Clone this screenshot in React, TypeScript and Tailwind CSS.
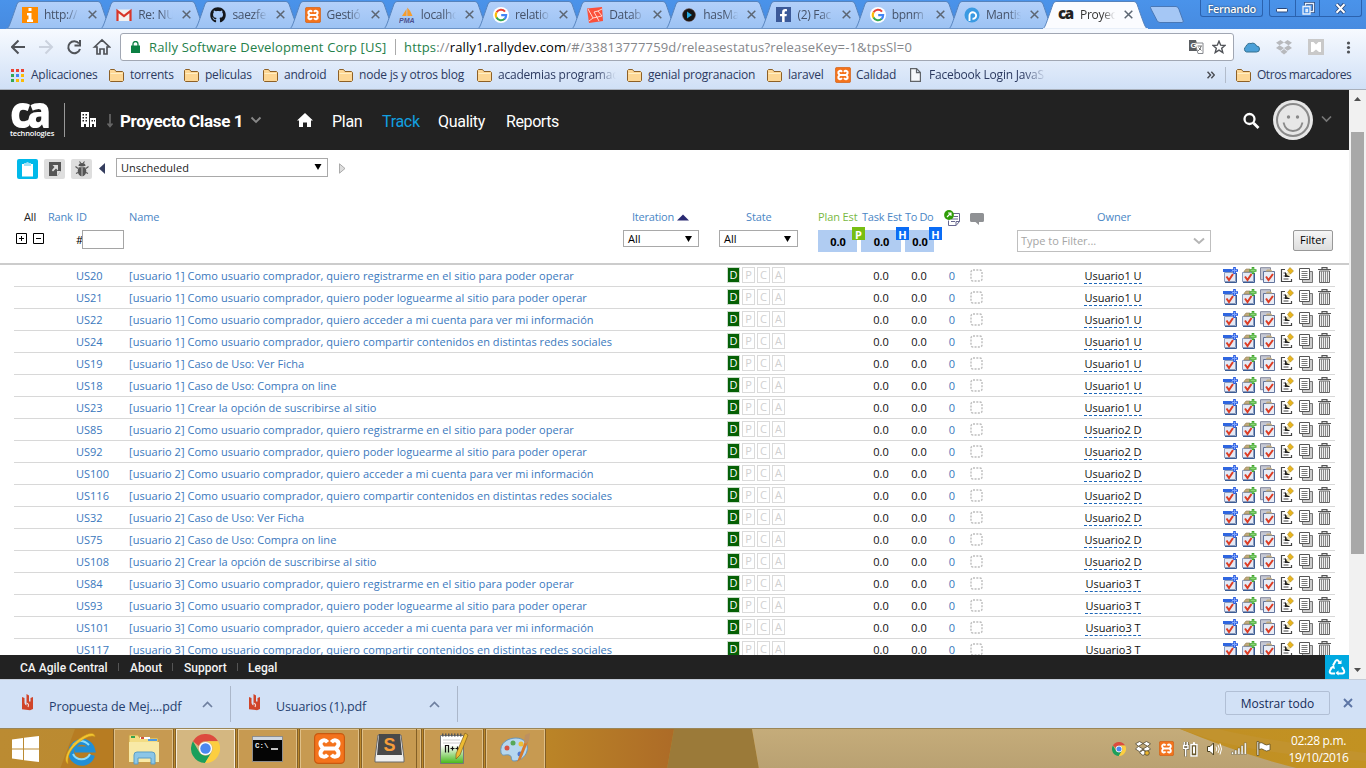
import React from "react";
import { FaGithub, FaFacebookF } from "react-icons/fa";

type Kind = "info" | "gmail" | "github" | "xampp" | "pma" | "google" | "laravel" | "play" | "facebook" | "mantis" | "ca";

function Xampp({ size }: { size: number }) {
  return (
    <svg width={size} height={size} viewBox="0 0 16 16" className="shrink-0">
      <rect x="0.3" y="0.3" width="15.4" height="15.4" rx="2" fill="#f4731c" stroke="#c85a10" strokeWidth="0.6" />
      <path d="M7 4.800C5.500 2.900 3 3.900 3.400 6C3.600 7 4.500 7.300 4.500 8S3.600 9 3.400 10C3 12.100 5.500 13.100 7 11.200M9 4.800C10.500 2.900 13 3.900 12.600 6C12.400 7 11.500 7.300 11.500 8S12.400 9 12.600 10C13 12.100 10.500 13.100 9 11.200M4.500 8H11.500" fill="none" stroke="#fff" strokeWidth="2.100" strokeLinejoin="round" />
    </svg>
  );
}

function Chrome({ size }: { size: number }) {
  return (
    <svg width={size} height={size} viewBox="0 0 30 30" className="shrink-0">
      <path d="M2 7.500A15 15 0 0 1 28 7.500H15a7.500 7.500 0 0 0-7 5z" fill="#dd4b3e" />
      <path d="M2 7.500A15 15 0 0 0 14.500 30l6.500-10.500a7.500 7.500 0 0 1-12.500-1z" fill="#1a9f5b" />
      <path d="M28 7.500A15 15 0 0 1 14.500 30L21.500 18.700A7.500 7.500 0 0 0 19 8.700L17 7.500z" fill="#fcce40" />
      <circle cx="15" cy="15" r="6.800" fill="#fff" />
      <circle cx="15" cy="15" r="5.400" fill="#4a88f0" />
    </svg>
  );
}

function Favicon({ kind }: { kind: Kind }) {
  switch (kind) {
    case "info":
      return (
        <svg width="16" height="16" viewBox="0 0 16 16"><rect width="16" height="16" fill="#ff8c00" /><path d="M6.500 1h3v3h-3zM5 6h4.500v6.500H11V15H5v-2.500h1.500v-4H5z" fill="#fff" /></svg>
      );
    case "gmail":
      return (
        <svg width="16" height="16" viewBox="0 0 16 16"><rect x="1" y="2.500" width="14" height="11.500" rx="1" fill="#f2f2f2" /><path d="M1.500 14V4L8 9l6.500-5v10" fill="none" stroke="#d8362a" strokeWidth="2.200" /></svg>
      );
    case "github":
      return <FaGithub size={16} color="#14171c" />;
    case "xampp":
      return <Xampp size={16} />;
    case "pma":
      return (
        <svg width="16" height="16" viewBox="0 0 16 16"><path d="M3 9 7.500 2v7zM8.300 9V0.500Q12 4 13.500 9z" fill="#f79c2c" /><text x="0" y="15.500" fontSize="7" fontWeight="bold" fontStyle="italic" fontFamily="Liberation Sans, sans-serif" textLength="15.500" fill="#4b5190">PMA</text></svg>
      );
    case "google":
      return (
        <svg width="16" height="16" viewBox="0 0 16 16"><circle cx="8" cy="8" r="8" fill="#fff" /><g fill="none" strokeWidth="2.100"><path d="M12 4.600A5.200 5.200 0 0 0 3.600 5.300" stroke="#ea4335" /><path d="M3.600 5.200A5.200 5.200 0 0 0 3.600 10.800" stroke="#fbbc05" /><path d="M3.500 10.600A5.200 5.200 0 0 0 11.700 11.800" stroke="#34a853" /><path d="M8.200 8.100h5A5.200 5.200 0 0 1 11.500 12" stroke="#4285f4" /></g></svg>
      );
    case "laravel":
      return (
        <svg width="16" height="16" viewBox="0 0 16 16"><path d="M0 1.500 15 0l1 14-14 2z" fill="#fb503b" /><path d="M1 2l5 9 9-2-4-5-4 1 5 9M6 11l-4 3M11 4l4-2" fill="none" stroke="#ffe5df" strokeWidth="0.9" /></svg>
      );
    case "play":
      return (
        <svg width="16" height="16" viewBox="0 0 16 16"><circle cx="8" cy="8" r="6.300" fill="#151515" stroke="#4d2716" strokeWidth="0.600" /><path d="M6 4.500 11 8l-5 3.500z" fill="#25a9e0" /></svg>
      );
    case "facebook":
      return <span className="flex h-[15px] w-[15px] items-end justify-center bg-[#3b5998]"><FaFacebookF size={13} color="#fff" /></span>;
    case "mantis":
      return (
        <svg width="16" height="16" viewBox="0 0 16 16"><circle cx="8" cy="8" r="7.500" fill="#3a9ae2" /><path d="M5.500 14V8.500a3.300 3.300 0 1 1 3 3.300" fill="none" stroke="#fff" strokeWidth="1.900" /></svg>
      );
    case "ca":
      return <span className="-mt-[3px] w-4 font-['Open_Sans',sans-serif] text-[15px] leading-[12px] font-extrabold tracking-[-1.5px] text-[#222]">ca</span>;
  }
}

const tabs: { kind: Kind; title: string }[] = [
  { kind: "info", title: "http://" },
  { kind: "gmail", title: "Re: NU" },
  { kind: "github", title: "saezfe" },
  { kind: "xampp", title: "Gestió" },
  { kind: "pma", title: "localhc" },
  { kind: "google", title: "relatio" },
  { kind: "laravel", title: "Datab" },
  { kind: "play", title: "hasMa" },
  { kind: "facebook", title: "(2) Fac" },
  { kind: "google", title: "bpnm" },
  { kind: "mantis", title: "Mantis" },
  { kind: "ca", title: "Proyec" },
];

function Tab({ kind, title, active }: { kind: Kind; title: string; active: boolean }) {
  return (
    <div className={active ? "relative z-10 flex h-[29px] w-[94.2px] shrink-0 items-center pl-4" : "relative flex h-[29px] w-[94.2px] shrink-0 items-center pl-4"}>
      <svg className="absolute top-0 left-0" width="107" height="29" viewBox="0 0 107 29">
        <defs>
          <linearGradient id="tabfill" x1="0" y1="0" x2="0" y2="1"><stop offset="0" stopColor="#b3d0fa" /><stop offset="1" stopColor="#9cc2f3" /></linearGradient>
        </defs>
        <path d="M0.500 29C3 28 4 24 11 4Q12 1.500 14 1.500H92Q94 1.500 95 4C102 24 103 28 106 29z" fill={active ? "#fbfcff" : "url(#tabfill)"} stroke="#5683bd" />
        <path d={active ? "M1 28.700h105" : "M0 28.500h107"} stroke={active ? "#f7faff" : "#6d94c6"} />
      </svg>
      <span className="relative flex h-4 w-4 shrink-0 items-center justify-center">
        <Favicon kind={kind} />
      </span>
      <span className={"relative ml-[6px] w-[37px] shrink-0 whitespace-nowrap text-[12px] tracking-[-0.3px] [mask-image:linear-gradient(to_right,#000_60%,transparent_95%)] " + (active ? "text-[#333]" : "text-[#46536a]")}>{title}</span>
      <svg className="relative ml-[7px] shrink-0" width="9" height="9" viewBox="0 0 9 9"><path d="M.7.7l7.600 7.600M8.300.7.700 8.300" stroke="#5c6673" strokeWidth="1.500" /></svg>
    </div>
  );
}

function Folder() {
  return (
    <svg width="15" height="13" viewBox="0 0 15 13" className="shrink-0">
      <path d="M.5 11.500v-10l1-1h4l1.500 2h6.500l1 1v8l-1 1h-12z" fill="#fdd795" stroke="#8d6026" />
      <path d="M1.500 4.500h12" stroke="#ffeec3" />
    </svg>
  );
}

function Bookmark({ label, wide, cls }: { label: string; wide?: string; cls?: string }) {
  return (
    <span className={"flex shrink-0 items-center gap-[6px] " + (cls ?? "")}>
      <Folder />
      <span className={"whitespace-nowrap " + (wide ?? "")}>{label}</span>
    </span>
  );
}

function BrowserChrome() {
  return (
    <div className="h-[90px] shrink-0 bg-[#4a90e8] text-[12px] text-[#2c3a60]">
      <div className="flex h-[29px] items-start bg-linear-to-b from-[#4a93ea] to-[#478be0] pl-[6px]">
        {tabs.map((t, i) => <Tab key={i} kind={t.kind} title={t.title} active={i === tabs.length - 1} />)}
        <svg className="mt-[6px] ml-[13px] shrink-0" width="36" height="18" viewBox="0 0 36 18"><path d="M2 .5h25q2 0 3 3l4 11q1 2-1 2H11q-2 0-3-2L2 3Q1 1 2 .5z" fill="#a5c7f5" stroke="#4a78b6" /></svg>
        <div className="ml-[15px] flex h-[17px] w-[63px] shrink-0 items-start justify-center rounded-b-[3px] border border-t-0 border-[#2b62ae] text-[11px] leading-[18px] font-semibold tracking-[-0.3px] text-white [text-shadow:0_0_2px_#123]">Fernando</div>
        <div className="ml-[6px] flex h-[17px] w-[93px] shrink-0 divide-x divide-[#2b62ae] rounded-b-[3px] border border-t-0 border-[#2b62ae]">
          <span className="flex w-[26px] items-center justify-center pt-[4px]"><svg width="13" height="5"><rect x=".5" y=".5" width="11" height="3.500" rx="1" fill="#fff" stroke="#28477b" /></svg></span>
          <span className="flex w-[24px] items-center justify-center pt-[1px]"><svg className="shrink-0" width="14" height="14" viewBox="0 0 14 14"><path d="M4.500 3.500v-2h8v8h-3" fill="none" stroke="#28477b" strokeWidth="2.800" /><path d="M4.500 3.500v-2h8v8h-3M2 4.500h7v7.500H2zM5 7.500h1.500v2H5z" fill="none" stroke="#e9f1fc" strokeWidth="1.300" /></svg></span>
          <span className="flex flex-1 items-center justify-center"><svg width="13" height="11" viewBox="0 0 13 11"><path d="M2.500 1l8 9M10.500 1l-8 9" stroke="#28477b" strokeWidth="3.800" /><path d="M2.500 1.300l8 8.400M10.500 1.300l-8 8.400" stroke="#fff" strokeWidth="2" /></svg></span>
        </div>
      </div>
      <div className="flex h-[61px] flex-col border-b border-[#a9b0bb] bg-linear-to-b from-[#f7faff] to-[#d0e0f6]">
        <div className="flex h-[36px] items-center pl-[11px]">
          <svg className="shrink-0" width="100" height="18" viewBox="0 0 100 18" fill="none" stroke="#505358" strokeWidth="2">
            <path d="M14 9H1.500M7.500 2.500 1 9l6.500 6.500" />
            <path d="M28 9h12.500M34.500 2.500 41 9l-6.500 6.500" stroke="#cbd2de" />
            <path d="M68 5.500A6 6 0 1 0 69 11M69 2v5.500h-5.500" />
            <path d="M83.500 9 91 2l7.500 7H96v7h-3v-5h-4v5h-3V9z" strokeWidth="1.700" />
          </svg>
          <div className="ml-[9px] flex h-[28px] w-[1114px] shrink-0 items-center rounded-[3px] border border-[#a1a7b3] bg-white pl-[10px]">
            <svg width="9" height="12" viewBox="0 0 9 12"><path d="M0 4.500h9V12H0z" fill="#0b8043" /><path d="M2 5V3a2.500 2.500 0 0 1 5 0v2" fill="none" stroke="#0b8043" strokeWidth="1.300" /></svg>
            <span className="ml-[9px] w-[238px] pt-[1px] text-[13px] tracking-[0.16px] whitespace-nowrap text-[#24804a]">Rally Software Development Corp [US]</span>
            <span className="ml-[8px] h-4 w-px bg-[#aaa]" />
            <span className="ml-[8px] pt-[1px] text-[13px] tracking-[0.17px] whitespace-nowrap text-[#85878b]"><span className="text-[#24804a]">https</span>://<span className="text-black">rally1.rallydev.com</span>/#/33813777759d/releasestatus?releaseKey=-1&amp;tpsSl=0</span>
            <svg className="mr-2 ml-auto shrink-0" width="15" height="14" viewBox="0 0 15 14"><path d="M0 0h7l3 11H0z" fill="#5a5d61" /><path d="M6 3h8v10.500H9z" fill="#fff" stroke="#85888d" /><text x="1.500" y="8" fontSize="8" fontWeight="bold" fontFamily="Liberation Sans, sans-serif" fill="#fff">G</text><path d="M8.500 6h4.500M9 11q3-2 3-5M9.500 7.500l3 3" stroke="#777" fill="none" /></svg>
            <svg className="mr-[7px] shrink-0" width="14" height="14" viewBox="0 0 14 14"><path d="M7 1.200 8.700 5.200 13 5.500 9.700 8.300 10.800 12.600 7 10.200 3.200 12.600 4.300 8.300 1 5.500 5.300 5.200z" fill="none" stroke="#4f5257" strokeWidth="1.400" /></svg>
          </div>
          <svg className="ml-[9px] shrink-0" width="17" height="12" viewBox="0 0 17 12"><path d="M3.500 11a3 3 0 0 1-.5-5.500A4 4 0 0 1 8 2.500 4 4 0 0 1 13.500 5 3 3 0 0 1 13.500 11z" fill="#4ba0d8" stroke="#35708f" /></svg>
          <svg className="ml-4 shrink-0" width="16" height="15" viewBox="0 0 16 15" fill="#b7b9bd"><path d="M4.500 0 8 2.500 3.500 5.300 0 2.800zM11.500 0 16 2.800l-3.500 2.500L8 2.500zM0 8l3.500-2.700L8 8l-3.500 2.700zM16 8l-3.500-2.700L8 8l3.500 2.700zM8 9l3.500 2.700L8 14.500l-3.500-2.800z" /></svg>
          <svg className="ml-4 shrink-0" width="16" height="16"><path d="M0 0h16v16H0z" fill="#c9c9c9" /><path d="M3 3h2.500L8 5.500 10.500 3H13v10h-2L8 10.500 5 13H3z" fill="#fff" /></svg>
          <svg className="ml-[22px] shrink-0" width="5" height="13" viewBox="0 0 5 13" fill="#4f5257"><circle cx="2.500" cy="2" r="1.600" /><circle cx="2.500" cy="6.500" r="1.600" /><circle cx="2.500" cy="11" r="1.600" /></svg>
        </div>
        <div className="flex h-5 items-center pl-[11px] text-[12px] leading-[18px] tracking-[-0.22px]">
          <svg width="13" height="13" viewBox="0 0 13 13"><path d="M0 0h3v3H0zM5 0h3v3H5zM10 0h3v3h-3z" fill="#e94335" /><path d="M0 5h3v3H0zM0 10h3v3H0z" fill="#34a853" /><path d="M5 5h3v3H5z" fill="#4285f4" /><path d="M10 5h3v3h-3zM5 10h3v3H5zM10 10h3v3h-3z" fill="#fbbc05" /></svg>
          <span className="ml-[7px] w-[78px]">Aplicaciones</span>
          <Bookmark label="torrents" cls="w-[75px]" />
          <Bookmark label="peliculas" cls="w-[79px]" />
          <Bookmark label="android" cls="w-[75px]" />
          <Bookmark label="node js y otros blog" cls="w-[139px]" />
          <Bookmark label="academias programac" cls="w-[150px]" wide="w-[118px] [mask-image:linear-gradient(to_right,#000_83%,transparent)]" />
          <Bookmark label="genial progranacion" cls="w-[140px]" />
          <Bookmark label="laravel" cls="w-[68px]" />
          <Xampp size={16} />
          <span className="ml-[5px] w-[54px]">Calidad</span>
          <svg width="11" height="14" viewBox="0 0 11 14"><path d="M.6.6h6l3.800 4v8.800H.6zM6.500.6v4h4" fill="#f6f8fb" stroke="#606468" strokeWidth="1.200" /></svg>
          <span className="ml-[8px] w-[118px] whitespace-nowrap [mask-image:linear-gradient(to_right,#000_80%,transparent)]">Facebook Login JavaS</span>
          <svg className="ml-[160px]" width="8" height="8" viewBox="0 0 8 8"><path d="M.5.8 3.500 4l-3 3.200M4.300.8l3 3.200-3 3.200" fill="none" stroke="#4b4e55" strokeWidth="1.500" /></svg>
          <span className="mr-[10px] ml-[10px] h-4 w-px bg-[#b2bccb]" />
          <Bookmark label="Otros marcadores" wide="tracking-[-0.46px]" />
        </div>
      </div>
    </div>
  );
}

function AppHeader() {
  return (
    <header className="flex h-[60px] shrink-0 items-center bg-[#222] text-[17px] text-white">
      <div className="flex h-[60px] w-[55px] shrink-0 flex-col pt-[12px] pl-[10px]">
        <span className="-mt-[10px] h-[39px] w-[44px] origin-left scale-x-[0.88] text-[44px] leading-[39px] font-extrabold tracking-[-4.5px]">ca</span>
        <span className="mt-[-2px] w-[45px] text-[7.5px] leading-[9px] font-semibold tracking-[-0.15px] whitespace-nowrap">technologies</span>
      </div>
      <span className="ml-[9px] h-[34px] w-px bg-[#999]" />
      <svg className="ml-[15px] shrink-0" width="16" height="16" viewBox="0 0 16 16"><path d="M1 0h8v15H1z" fill="#fff" /><path d="M2.500 2h1.500v1.500H2.500zM5.500 2H7v1.500H5.500zM2.500 5h1.500v1.500H2.500zM5.500 5H7v1.500H5.500zM2.500 8h1.500v1.500H2.500zM5.500 8H7v1.500H5.500zM4 12h2v3H4z" fill="#222" /><path d="M10 6h6v9h-2v-3h-2v3h-2z" fill="#fff" /><path d="M11.500 8H13v1.500h-1.500zM14 8h1v1.500h-1z" fill="#222" /></svg>
      <svg className="ml-[10px]" width="8" height="15" viewBox="0 0 8 15"><path d="M4 1v12M1.500 10.500l2.500 3 2.500-3" fill="none" stroke="#666" strokeWidth="1.700" /></svg>
      <span className="ml-[6px] w-[124px] pt-[3px] font-[Roboto,sans-serif] text-[17px] font-bold tracking-[-0.35px] whitespace-nowrap">Proyecto Clase 1</span>
      <svg className="ml-[6px]" width="12" height="8" viewBox="0 0 12 8"><path d="M1.500 1.500 6 6l4.500-4.500" fill="none" stroke="#888" strokeWidth="1.900" /></svg>
      <svg className="ml-[35px]" width="16" height="14" viewBox="0 0 16 14"><path d="M8 0l8 7.500h-2V14h-4V9.500H6V14H2V7.500H0z" fill="#fff" /></svg>
      <nav className="ml-[19px] flex pt-[3px] font-[Roboto,sans-serif] text-[16px] tracking-[-0.3px] whitespace-nowrap">
        <span className="w-[50px]">Plan</span>
        <span className="w-[56px] text-[#12a0e0]">Track</span>
        <span className="w-[68px]">Quality</span>
        <span className="tracking-[-0.4px]">Reports</span>
      </nav>
      <svg className="mt-[2px] ml-auto" width="17" height="18" viewBox="0 0 17 18"><circle cx="6.500" cy="7" r="5" fill="none" stroke="#fff" strokeWidth="2.300" /><path d="M10.500 11l5 5" stroke="#fff" strokeWidth="2.800" /></svg>
      <svg className="ml-[13px]" width="40" height="40" viewBox="0 0 40 40"><circle cx="20" cy="20" r="20" fill="#e7e7e7" /><circle cx="20" cy="20" r="16" fill="none" stroke="#8a8a8a" strokeWidth="2" /><circle cx="15.500" cy="17" r="1.700" fill="#8a8a8a" /><circle cx="24.500" cy="17" r="1.700" fill="#8a8a8a" /><path d="M10.500 22.500q2 8.500 9.500 8.500t9.500-8.500" fill="none" stroke="#8a8a8a" strokeWidth="1.800" /></svg>
      <svg className="mr-[17px] ml-[8px] -mt-[2px]" width="11" height="8" viewBox="0 0 11 8"><path d="M1 1.500 5.500 6 10 1.500" fill="none" stroke="#777" strokeWidth="1.700" /></svg>
    </header>
  );
}

function Caret({ size = 7 }: { size?: number }) {
  return <svg width={size} height="6" viewBox="0 0 7 6"><path d="M0 0h7L3.500 6z" fill="#000" /></svg>;
}

function ReleaseBar() {
  return (
    <div className="flex h-[60px] shrink-0 items-start pt-[8px] pl-[17px]">
      <span className="mt-[1px] flex h-5 w-[21px] items-center justify-center rounded-[2px] bg-[#00b9ea]"><svg width="13" height="15" viewBox="0 0 13 15"><path d="M1 2h11v12.500H1z" fill="#fff" /><path d="M3 1h2q1.500-2 3 0h2v3H3z" fill="#9fe2f6" /></svg></span>
      <span className="mt-[1px] ml-[6px] flex h-5 w-[21px] items-center justify-center rounded-[2px] bg-[#dedede]"><svg width="12" height="14" viewBox="0 0 12 14"><path d="M0 0h12v9l-4 5H0z" fill="#555" /><path d="M3.500 3H9v5.500L7 6.500l-3 3L2.800 8.200 5.500 5zM8 14V9h4z" fill="#dedede" /></svg></span>
      <span className="mt-[1px] ml-[6px] flex h-5 w-[21px] items-center justify-center rounded-[2px] bg-[#dedede]"><svg width="14" height="16" viewBox="0 0 14 16"><ellipse cx="7" cy="10" rx="4.300" ry="5.300" fill="#555" /><path d="M3.500 5a3.500 3 0 0 1 7 0z" fill="#555" /><path d="M4.500.5l1.500 2M9.500.5 8 2.500M.5 5.500 3 7.500M13.500 5.500 11 7.500M1 12.500 3 11.500M13 12.500 11 11.500" stroke="#555" strokeWidth="1.100" /><path d="M7 6.500V15M3 5.800h8" stroke="#dedede" strokeWidth=".8" /></svg></span>
      <svg className="mt-[5px] ml-[7px]" width="6" height="11" viewBox="0 0 6 11"><path d="M6 0v11L0 5.500z" fill="#343d5e" /></svg>
      <div className="ml-[11px] flex h-[19px] w-[212px] items-center justify-between border border-[#a9a9a9] pt-[1px] pr-[5px] pl-[4px] text-[11px] tracking-[0.05px] text-[#222]">Unscheduled<span className="-mt-[2px]"><Caret size={8} /></span></div>
      <svg className="mt-[5px] ml-[11px]" width="7" height="11" viewBox="0 0 7 11"><path d="M.5.8v9.400l5.500-4.700z" fill="#ddd" stroke="#999" strokeWidth=".8" /></svg>
    </div>
  );
}

function Badge({ letter, green }: { letter: string; green?: boolean }) {
  return <span className={"absolute -top-[3px] -right-[8px] z-10 flex h-[13px] w-[13px] items-center justify-center pt-[1px] font-['Open_Sans',sans-serif] text-[11px] leading-none font-bold text-white " + (green ? "bg-[#78be12]" : "bg-[#0a6cf5]")}>{letter}</span>;
}

function TableHead() {
  return (
    <div className="h-[55px] shrink-0 border-b-2 border-[#ccc] text-[11px] leading-[14px] text-[#4a86c5]">
      <div className="ml-[24px] grid h-[17px] grid-cols-[24px_28px_53px_503px_114px_72px_44px_43px_39px_26px_127px_1fr] items-start tracking-[-0.1px] whitespace-nowrap">
        <span className="text-[#222]">All</span>
        <span className="tracking-[-0.2px]">Rank</span>
        <span>ID</span>
        <span>Name</span>
        <span className="flex items-center gap-[3px] tracking-[-0.2px]">Iteration <svg width="12" height="7" viewBox="0 0 12 7"><path d="M0 6.500h12L6 .5z" fill="#2a2a72" /></svg></span>
        <span>State</span>
        <span className="text-[#79b843]">Plan Est</span>
        <span className="tracking-[-0.2px]">Task Est</span>
        <span className="tracking-[-0.35px]">To Do</span>
        <svg width="17" height="17" viewBox="0 0 17 17"><path d="M7 3.500h8.500v8L12 15.500H4.500v-5" fill="#fff" stroke="#66668e" /><path d="M9.500 6.500H14M7 9h7M7 11.500h4M12 15.500v-4h3.500" stroke="#66668e" fill="none" /><circle cx="5" cy="5" r="4.900" fill="#2f9d08" /><path d="M3 7l4-4M4 3h3v3" fill="none" stroke="#fff" strokeWidth="1.100" /></svg>
        <svg className="mt-[3px]" width="14" height="12" viewBox="0 0 14 12"><path d="M1.500 0h11q1.500 0 1.500 1.500v6q0 1.500-1.500 1.500H9v3L5.500 9h-4Q0 9 0 7.500v-6Q0 0 1.500 0z" fill="#8f9194" /></svg>
        <span>Owner</span>
      </div>
      <div className="ml-4 grid h-[24px] grid-cols-[60px_547px_96px_99px_43px_44px_112px_276px_40px] items-start text-black">
        <span className="flex gap-[6px] pt-[6px]">
          <svg width="11" height="11"><path d="M.5.5h10v10H.5zM3 5.500h5M5.500 3v5" fill="none" stroke="#000" /></svg>
          <svg width="11" height="11"><path d="M.5.5h10v10H.5zM3 5.500h5" fill="none" stroke="#000" /></svg>
        </span>
        <span className="flex items-center pt-[3px]"><span className="w-[6px]">#</span><span className="h-[19px] w-[42px] border border-[#a5a5a5] bg-white" /></span>
        <span className="mt-[3px] flex h-[17px] w-[76px] items-center justify-between border border-[#a9a9a9] pr-[6px] pl-[4px]">All<Caret /></span>
        <span className="mt-[3px] flex h-[17px] w-[79px] items-center justify-between border border-[#a9a9a9] pr-[6px] pl-[4px]">All<Caret /></span>
        <span className="relative mt-[3px] flex h-[22px] w-[39px] items-center justify-center bg-[#b0ccf2] pt-[2px] pl-[1px] font-bold">0.0<Badge letter="P" green /></span>
        <span className="relative mt-[3px] flex h-[22px] w-[40px] items-center justify-center bg-[#b0ccf2] pt-[2px] pl-[1px] font-bold">0.0<Badge letter="H" /></span>
        <span className="relative mt-[3px] flex h-[22px] w-[29px] items-center justify-center bg-[#b0ccf2] pt-[2px] pl-[1px] font-bold">0.0<Badge letter="H" /></span>
        <span className="mt-[3px] flex h-[22px] w-[194px] items-center justify-between border border-[#bfbfbf] pr-[5px] pl-[3px] text-[#a5a5a5]">Type to Filter...<svg width="12" height="8" viewBox="0 0 12 8"><path d="M1 1.500 6 6l5-4.500" fill="none" stroke="#b5b5b5" strokeWidth="2" /></svg></span>
        <span className="mt-[3px] flex h-[21px] items-center justify-center rounded-[2px] border border-[#989898] bg-linear-to-b from-[#f6f6f6] to-[#dddddd] pb-[1px]">Filter</span>
      </div>
    </div>
  );
}

const stories: [string, string][] = [
  ["US20", "registrarme en el sitio para poder operar"],
  ["US21", "poder loguearme al sitio para poder operar"],
  ["US22", "acceder a mi cuenta para ver mi información"],
  ["US24", "compartir contenidos en distintas redes sociales"],
  ["US19", "Caso de Uso: Ver Ficha"],
  ["US18", "Caso de Uso: Compra on line"],
  ["US23", "Crear la opción de suscribirse al sitio"],
  ["US85", "registrarme en el sitio para poder operar"],
  ["US92", "poder loguearme al sitio para poder operar"],
  ["US100", "acceder a mi cuenta para ver mi información"],
  ["US116", "compartir contenidos en distintas redes sociales"],
  ["US32", "Caso de Uso: Ver Ficha"],
  ["US75", "Caso de Uso: Compra on line"],
  ["US108", "Crear la opción de suscribirse al sitio"],
  ["US84", "registrarme en el sitio para poder operar"],
  ["US93", "poder loguearme al sitio para poder operar"],
  ["US101", "acceder a mi cuenta para ver mi información"],
  ["US117", "compartir contenidos en distintas redes sociales"],
];
const owners = ["Usuario1 U", "Usuario2 D", "Usuario3 T"];

function RowIcons() {
  return (
    <svg className="-ml-px" width="110" height="17" viewBox="0 0 110 17">
      <path d="M2.500 5.500h11v9h-11z" fill="#e4eaf6" stroke="#8a9bbd" />
      <path d="M3 15.500h11.500V6" fill="none" stroke="#3b5c93" />
      <path d="M1 2h8v3H1z" fill="#2f66e0" />
      <path d="M4.500 9.500l2.500 3.500L11 7" fill="none" stroke="#dc3d25" strokeWidth="2" />
      <path d="M12.500 0v7M9 3.500h7" stroke="#2458e0" strokeWidth="2.600" /><path d="M12.500 1v5M10 3.500h5" stroke="#7fa5fa" strokeWidth="1" />
      <path d="M20.500 5.500h11v9h-11z" fill="#e4eaf6" stroke="#8a9bbd" />
      <path d="M21 15.500h11.500V6" fill="none" stroke="#3b5c93" />
      <path d="M22 4.500l2-2.500h4v3h-6z" fill="#c3ac7d" stroke="#8f7c55" strokeWidth=".6" />
      <path d="M23 9.500l2.500 3.500L29.500 7" fill="none" stroke="#dc3d25" strokeWidth="2" />
      <path d="M31 0v7M27.500 3.500h7" stroke="#3fa42b" strokeWidth="2.600" /><path d="M31 1v5M28.500 3.500h5" stroke="#8bd67a" strokeWidth="1" />
      <path d="M38.500.7h10v12h-10z" fill="#c7c9d4" stroke="#83889c" />
      <path d="M41.500 4.500h11v11h-11z" fill="#e8edf6" stroke="#60739c" />
      <path d="M43.500 4.500l1.500-2h4l1.500 2z" fill="#c3ac7d" />
      <path d="M44 9.500l2.500 3.500L51 7" fill="none" stroke="#dc3d25" strokeWidth="2" />
      <path d="M63 2.500h-3.500v12h10V12M61.500 6h2M61.500 9h2M61.500 12h5" fill="none" stroke="#444" strokeWidth="1.200" />
      <path d="M63 5v5h5z" fill="#222" /><path d="M64.500 8 66 4l3 3-2 2z" fill="#eee2b0" /><path d="M65.500 3.500 68 .5l3.500 3.500L68.500 7z" fill="#e8b51e" stroke="#9c7a1a" strokeWidth=".5" />
      <path d="M80.500 12.500V15.500h10V4.500H88" fill="#ccc" stroke="#777" /><path d="M77.500 1.500h10v11h-10z" fill="#fff" stroke="#555" /><path d="M79.500 4.500h6M79.500 6.500h6M79.500 8.500h6M79.500 10.500h6" stroke="#777" fill="none" />
      <path d="M96 2.500h13M100 2V.7h5V2" stroke="#555" strokeWidth="1.200" fill="none" /><path d="M97.500 4h10v11.500h-10z" fill="#eee" stroke="#666" /><path d="M99.500 4v11M101.500 4v11M103.500 4v11M105.500 4v11" stroke="#8a8a8a" />
    </svg>
  );
}

function Row({ id, text, index }: { id: string; text: string; index: number }) {
  const user = Math.floor(index / 7);
  const full = /^C/.test(text) ? text : "Como usuario comprador, quiero " + text;
  return (
    <div className="ml-[14px] grid h-[22px] w-[1321px] shrink-0 grid-cols-[62px_53px_598px_60px_76px_36px_40px_26px_22px_16px_220px_112px] items-center border-b border-[#d8d8d8] text-[11px] leading-[20px] whitespace-nowrap text-[#111]">
      <span />
      <span className="text-[#3a78bd]">{id}</span>
      <span className="tracking-[0.042px] text-[#3a78bd]">[usuario {user + 1}] {full}</span>
      <span className="-mt-[2px] flex gap-[2px] text-[11px] leading-[14px]">
        <span className="h-4 w-[13px] border border-[#ccdccc] bg-[#056005] text-center text-white">D</span>
        {["P", "C", "A"].map((s) => <span key={s} className="h-4 w-[13px] border border-[#dadada] text-center text-[#d0d0d0]">{s}</span>)}
      </span>
      <span />
      <span className="text-center">0.0</span>
      <span className="text-center">0.0</span>
      <span className="text-center text-[#3a78bd]">0</span>
      <svg className="mx-auto" width="13" height="13"><rect x="1" y="1" width="11" height="11" rx="2" fill="none" stroke="#bdbdbd" strokeWidth="1.400" strokeDasharray="2 1.300" /></svg>
      <span />
      <span className="flex justify-center"><span className="h-[16px] border-b border-dashed border-[#1c66b8] leading-[15px]">{owners[user]}</span></span>
      <RowIcons />
    </div>
  );
}

function Scrollbar() {
  return (
    <div className="flex w-[17px] shrink-0 flex-col items-center bg-[#f1f1f1]">
      <svg className="mt-[7px]" width="7" height="4"><path d="M0 4h7L3.500 0z" fill="#505050" /></svg>
      <div className="mt-[31px] h-[422px] w-[13px] bg-[#a8a8a8]" />
      <svg className="mt-auto mb-[7px]" width="7" height="4"><path d="M0 0h7L3.500 4z" fill="#505050" /></svg>
    </div>
  );
}

function AppFooter() {
  return (
    <footer className="flex h-6 shrink-0 items-center bg-[#222] pl-5 font-[Roboto,sans-serif] text-[12px] font-medium whitespace-nowrap text-[#f4f4f4]">
      <span className="w-[98px] pt-[2px]">CA Agile Central</span>
      <span className="h-2 w-px bg-[#555]" /><span className="w-[53px] pt-[2px] pl-[11px]">About</span>
      <span className="h-2 w-px bg-[#555]" /><span className="w-[64px] pt-[2px] pl-[11px]">Support</span>
      <span className="h-2 w-px bg-[#555]" /><span className="pt-[2px] pl-[10px]">Legal</span>
      <span className="ml-auto flex h-6 w-6 items-center justify-center bg-[#00a9e0]">
        <svg width="18" height="18" viewBox="0 0 18 18" fill="none" stroke="#fff" strokeWidth="2"><path d="M5 7.500 7.500 3q1.500-2.200 3 0l1.200 2M3.800 9.500 2 12.500q-1 2.500 1.500 3H7M14 9l2 3.500q1 2.500-1.500 3H10" /><path d="M9.500 6h4V2zM10.500 12.500v5l-3-2.500zM2 9.500 6 7l1 4z" fill="#fff" stroke="none" /></svg>
      </span>
    </footer>
  );
}

function PdfIcon() {
  return <svg width="11" height="17" viewBox="0 0 11 17"><path d="M0 3l2.500 1v5q.5 2 2 2.500V0L7 1.500v6h1.500V4L11 3v12l-3 1.200-8-1z" fill="#d0452a" /><path d="M4.500 9q3 1 1.500 4" stroke="#f5d5cc" fill="none" strokeWidth="1.200" /></svg>;
}
function Up() {
  return <svg width="11" height="7" viewBox="0 0 11 7"><path d="M1 6l4.500-4.500L10 6" fill="none" stroke="#6e7f9f" strokeWidth="1.700" /></svg>;
}

function DownloadShelf() {
  return (
    <div className="flex h-[49px] shrink-0 items-center border-t border-[#c4ccd8] bg-[#d2e1f6] text-[13px] whitespace-nowrap text-[#253e6f]">
      <div className="flex h-9 w-[231px] items-center border-r border-[#abb7ca] pl-[22px]">
        <span className="-mt-1"><PdfIcon /></span><span className="ml-4 w-[153px] pt-[6px] text-[12.5px] tracking-[-0.12px]">Propuesta de Mej....pdf</span><Up />
      </div>
      <div className="flex h-9 w-[227px] items-center border-r border-[#abb7ca] pl-[18px]">
        <span className="-mt-1"><PdfIcon /></span><span className="ml-4 w-[153px] pt-[6px] text-[12.5px] tracking-[-0.12px]">Usuarios (1).pdf</span><Up />
      </div>
      <button className="mt-[-2px] mr-[13px] ml-auto h-6 w-[105px] rounded-[2px] border border-[#b1bfd5] text-[12px] leading-[21px] text-[#142b58]">Mostrar todo</button>
      <svg className="mr-[13px] -mt-[2px]" width="10" height="10" viewBox="0 0 10 10"><path d="M1 1l8 8M9 1 1 9" stroke="#5d75a5" strokeWidth="1.900" /></svg>
    </div>
  );
}

function Task({ children, active, cls = "mr-[3px] w-[59px]" }: { children: React.ReactNode; active?: boolean; cls?: string }) {
  return <div className={"flex h-10 shrink-0 items-center justify-center border outline outline-[#835f26] " + cls + (active ? " border-[#f5ecd9] bg-[#d4b781]" : " border-[#dfc089] bg-[#c79a51]")}>{children}</div>;
}

function Taskbar() {
  return (
    <div className="relative flex h-10 shrink-0 items-center overflow-hidden border-t border-[#9a8658] bg-linear-to-r from-[#bb8b32] via-[#bc8629] via-40% to-[#c29222]">
      <svg className="absolute inset-0" width="1366" height="40" viewBox="0 0 1366 40" preserveAspectRatio="none">
        <defs>
          <linearGradient id="amber"><stop offset="0" stopColor="#bb8527" /><stop offset="1" stopColor="#ad6b27" /></linearGradient>
          <linearGradient id="sand" x1="0" y1="0" x2="0" y2="1"><stop offset="0" stopColor="#c5ac7a" /><stop offset="1" stopColor="#b9a172" /></linearGradient>
        </defs>
        <path d="M75 0h50v40H60z" fill="#b77c22" /><path d="M544 0h130l-7 40H544z" fill="url(#amber)" /><path d="M674 0h78l7 40h-92z" fill="#9b7a39" /><path d="M752 0h428q60 25 120 40H759z" fill="url(#sand)" /><path d="M1180 0h38q50 12 148 24v8q-90-5-150-20z" fill="#c2932e" />
      </svg>
      <div className="relative flex items-center">
        <div className="flex w-[53px] pl-3"><svg width="27" height="26" viewBox="0 0 27 26" fill="#fff"><path d="M0 3.500 11 2v10.500H0zM12 1.800 27 0v12.500H12zM0 13.500h11V24L0 22.500zM12 13.500h15V26l-15-1.800z" /></svg></div>
        <svg className="mr-[16px] ml-[11px]" width="34" height="34" viewBox="0 0 34 34"><path d="M28 23A10.500 10.500 0 1 1 28 17.500H11" fill="none" stroke="#218fd6" strokeWidth="6" /><path d="M26 22A9.500 9.500 0 0 1 9 22M9 13Q17 5 25 13" fill="none" stroke="#8edcfa" strokeWidth="2" /><path d="M4 32C-2 28 5 14 15 7S31 0 31 5C28 2 20 6 13 12S3 25 4 32" fill="#f3c630" stroke="#c99418" strokeWidth=".6" /></svg>
        <Task><svg width="32" height="32" viewBox="0 0 32 32"><path d="M1 2h9l2 3h18v24H1z" fill="#f3dc83" stroke="#c9a146" /><path d="M3 3h4v2H3z" fill="#33a34d" /><path d="M12 4h10v2H12z" fill="#fff" /><path d="M13 4h3v2h-3z" fill="#d5533a" /><path d="M20 6h9v2h-9z" fill="#4f9ae0" /><path d="M1 9h30v20H1z" fill="#f8e9a6" /><path d="M6 31V22q0-3 3-3h15q3 0 3 3v9h-4v-6H10v6z" fill="#8bc6e7" stroke="#5a9dc5" /></svg></Task>
        <Task active><Chrome size={29} /></Task>
        <Task><svg width="31" height="26" viewBox="0 0 31 26"><path d="M.5.5h30v25H.5z" fill="#050505" stroke="#8e8e8e" /><path d="M1 1h29v3H1z" fill="#cfd6df" /><text x="3" y="12" fontSize="7.500" fontFamily="Liberation Mono, monospace" fontWeight="bold" fill="#eee">C:\</text><path d="M19 13h7" stroke="#fff" strokeWidth="1.500" /></svg></Task>
        <Task><Xampp size={31} /></Task>
        <Task cls="w-[55px]"><svg width="31" height="31" viewBox="0 0 31 31"><path d="M4 2h23l3 23v4H1v-4z" fill="#efefef" stroke="#6a6a6a" /><path d="M5 1h21l2 21H3z" fill="#494949" /><text x="9.500" y="18" fontSize="18" fontWeight="bold" fontFamily="Liberation Sans, sans-serif" fill="#f79d3a">S</text></svg></Task>
        <div className="mr-[3px] h-10 w-[4px] border border-l-0 border-[#dfc089] bg-[#c79a51] outline outline-[#835f26]" />
        <Task><svg width="31" height="33" viewBox="0 0 31 33"><defs><linearGradient id="npp" x1="0" y1="0" x2="0" y2="1"><stop offset="0.35" stopColor="#fff" /><stop offset="1" stopColor="#45b818" /></linearGradient></defs><path d="M2.500 3.500h23v28h-23z" fill="url(#npp)" stroke="#777" /><path d="M4 3h20" stroke="#555" strokeWidth="3" strokeDasharray="1.500 1.500" /><path d="M5 8h17M5 11h17" stroke="#ccc" /><path d="M7.500 20.500v-7h3v7M12.500 16.500h4M14.500 14.500v4M17.500 16.500h4M19.500 14.500v4" fill="none" stroke="#111" strokeWidth="1.200" /><path d="M27 1l3 2L22 23l-4 4 0-5z" fill="#edbb32" stroke="#84601b" strokeWidth=".7" /></svg></Task>
        <Task><svg width="33" height="31" viewBox="0 0 33 31"><path d="M2 20C0 10 9 5 17 5s13 6 11 13-8 10-13 10c-4 0-1-5-5-6s-6 2-8-2z" fill="#b6d7ef" stroke="#6796bc" /><circle cx="8" cy="15" r="2.500" fill="#d85444" /><circle cx="14" cy="10" r="2.500" fill="#57a858" /><circle cx="22" cy="11" r="2.500" fill="#edbd38" /><circle cx="21" cy="21" r="2.500" fill="#4f79cf" /><path d="M18 29l8-21 3 1-7 17z" fill="#d77b2a" /><path d="M25 9l1-7 5-2-1 8-3 3z" fill="#bd9060" /></svg></Task>
      </div>
      <div className="relative mr-[17px] ml-auto flex items-center">
        <Chrome size={14} />
        <svg className="ml-[9px]" width="16" height="15" viewBox="0 0 16 15" stroke="#514932" strokeWidth=".8" fill="#fff"><path d="M4.500.5 8 2.500 3.500 5.300.5 2.800zM11.500.5l4 2.300-3 2.500L8 2.500zM.5 8l3-2.700L8 8l-3.500 2.700zM15.500 8l-3-2.700L8 8l3.500 2.700zM8 9l3.500 2.700L8 14.500l-3.500-2.800z" /><circle cx="12" cy="12" r="2.300" fill="#edb52b" /></svg>
        <span className="ml-[8px]"><Xampp size={15} /></span>
        <svg className="ml-[9px]" width="15" height="16" viewBox="0 0 15 16"><path d="M1.200 1v3M4.200 1v3M.5 4.500h4.500v3H.5zM2.700 8v7.500" fill="none" stroke="#443a20" strokeWidth="2.400" /><path d="M7.300 2.700h7.400v13H7.300z" fill="#6b5a2e" /><path d="M1.200 1v3M4.200 1v3M.5 4.500h4.500v3H.5zM2.700 8v7.500M8 3.500h6V15H8zM10 2h2" fill="none" stroke="#fff" strokeWidth="1.500" /><path d="M10 5.500h2v7h-2z" fill="#fff" /></svg>
        <svg className="ml-[9px]" width="15" height="14" viewBox="0 0 15 14"><path d="M.5 4.500H3L6.500 1v12L3 9.500H.5z" fill="#fff" stroke="#4d421f" /><path d="M9 4.500q1.500 2.500 0 5M11 3q2.500 4 0 8M13 1.500q3 5.500 0 11" fill="none" stroke="#fff" /></svg>
        <svg className="ml-[9px]" width="16" height="13" viewBox="0 0 16 13"><path d="M.5 10h2v2.500h-2zM3.700 8h2v4.500h-2zM6.900 6h2v6.500h-2zM10.100 3.500h2v9h-2zM13.300.7h2v11.800h-2z" fill="#fff" stroke="#4d421f" strokeWidth=".4" /></svg>
        <svg className="ml-[9px]" width="15" height="15" viewBox="0 0 15 15"><path d="M1 .5h1.800v14H1zM3 2q3-1 5 1t6 0v6q-4 2-6 0T3 8.500z" fill="#fff" stroke="#4d421f" strokeWidth=".7" /></svg>
        <div className="ml-[17px] w-[61px] text-center text-[12px] leading-[17px] tracking-[-0.35px] whitespace-nowrap text-white"><div>02:28 p.m.</div><div>19/10/2016</div></div>
      </div>
    </div>
  );
}

export default function App() {
  return (
    <div className="flex h-[768px] w-[1366px] flex-col overflow-hidden bg-white font-['Open_Sans','Noto_Sans',sans-serif]">
      <BrowserChrome />
      <div className="flex h-[589px] shrink-0">
        <div className="flex w-[1349px] flex-col">
          <AppHeader />
          <main className="flex h-[505px] shrink-0 flex-col overflow-hidden">
            <ReleaseBar />
            <TableHead />
            {stories.map(([id, text], i) => <Row key={id} id={id} text={text} index={i} />)}
          </main>
          <AppFooter />
        </div>
        <Scrollbar />
      </div>
      <DownloadShelf />
      <Taskbar />
    </div>
  );
}
